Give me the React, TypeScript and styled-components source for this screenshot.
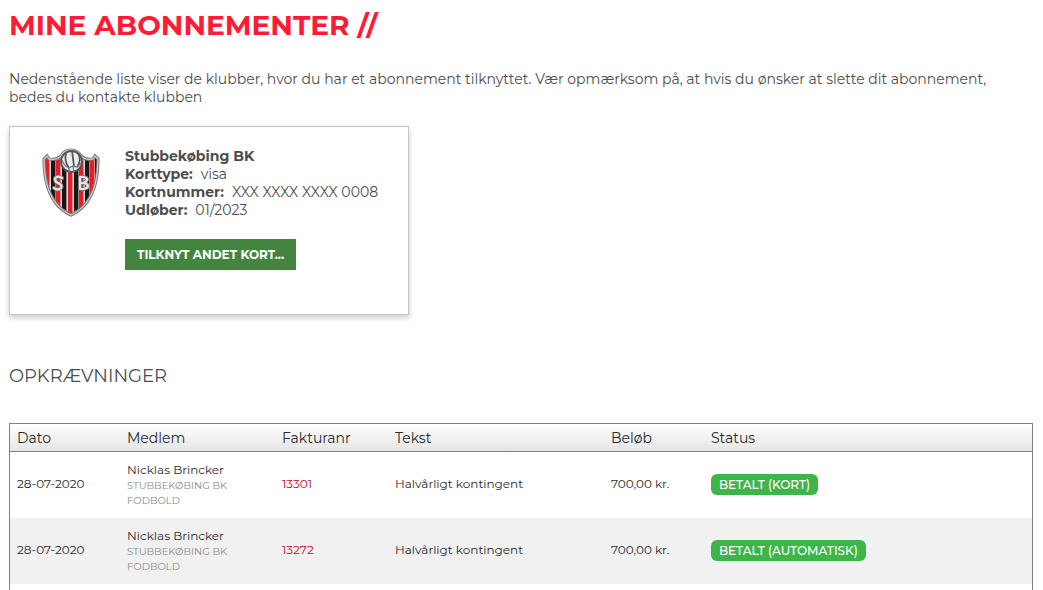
import React from 'react';
import styled, { createGlobalStyle } from 'styled-components';

const GlobalStyle = createGlobalStyle`
  *, *::before, *::after { box-sizing: border-box; }
  body {
    margin: 0;
    background: #fff;
    color: #4d4d4d;
    font-family: Montserrat, Inter, "Liberation Sans", sans-serif;
    font-size: 14px;
    line-height: 18px;
  }
`;

const Page = styled.main`
  display: flex;
  flex-direction: column;
  min-height: 100vh;
  padding: 7px 10px 0 9px;
`;

const Title = styled.h1`
  margin: 0 0 26px;
  color: #ff1a35;
  font-size: 28px;
  font-weight: 700;
  line-height: 36px;
  text-transform: uppercase;
`;

const Intro = styled.p`
  margin: 0 0 20px;
  max-width: 1000px;
  padding-top: 1px;
`;

const Card = styled.section`
  display: flex;
  gap: 24px;
  width: 400px;
  max-width: 100%;
  padding: 20px 20px 44px 31px;
  border: 1px solid #c4c4c4;
  box-shadow: 0 3px 6px rgba(0, 0, 0, 0.2);
`;

const Crest = styled.svg`
  flex: none;
  width: 60px;
  height: 72px;
`;

const CardBody = styled.div`
  flex: 1;
`;

const CardLine = styled.div`
  white-space: nowrap;
`;

const Label = styled.strong<{ $spaced?: boolean }>`
  font-weight: 700;
  margin-right: ${({ $spaced }) => ($spaced ? '8px' : '0')};
`;

const LinkCardButton = styled.button`
  height: 31px;
  margin-top: 20px;
  padding: 0 12px;
  border: 0;
  background: #43853f;
  color: #fff;
  font: inherit;
  font-size: 12px;
  font-weight: 700;
  text-transform: uppercase;
  white-space: nowrap;
  cursor: pointer;
`;

const SectionTitle = styled.h2`
  margin: 49px 0 35px;
  font-size: 18px;
  font-weight: 400;
  line-height: 24px;
  text-transform: uppercase;
`;

const TableFrame = styled.div`
  flex: 1;
  border: 1px solid #7f7f7f;
  border-bottom: 0;
`;

const Table = styled.table`
  width: 100%;
  border-collapse: separate;
  border-spacing: 0;
  table-layout: fixed;
  color: #2b2b2b;
  font-size: 12px;
`;

const HeadCell = styled.th<{ $width?: number }>`
  width: ${({ $width }) => ($width ? `${$width}px` : 'auto')};
  height: 28px;
  padding: 0 7px;
  border-bottom: 1px solid #7f7f7f;
  font-size: 14px;
  font-weight: 400;
  text-align: left;
`;

const HeadRow = styled.tr`
  background: linear-gradient(#fff, #e4e4e4);
`;

const Row = styled.tr`
  &:nth-child(even) { background: #f1f1f1; }
`;

const Cell = styled.td`
  height: 66px;
  padding: 0 7px 2px;
  vertical-align: middle;
`;

const Member = styled.div`
  line-height: 17px;
`;

const Club = styled.div`
  color: #8c8c8c;
  font-size: 10px;
  line-height: 15px;
  text-transform: uppercase;
`;

const InvoiceLink = styled.a`
  color: #c00a26;
  text-decoration: none;
`;

const Badge = styled.span`
  display: inline-block;
  padding: 0 8px;
  border-radius: 6px;
  background: #3eb549;
  color: #fff;
  font-weight: 500;
  line-height: 21px;
  text-transform: uppercase;
  vertical-align: middle;
  white-space: nowrap;
`;

const columns = [
  { name: 'Dato', width: 110 },
  { name: 'Medlem', width: 155 },
  { name: 'Fakturanr', width: 113 },
  { name: 'Tekst', width: 216 },
  { name: 'Beløb', width: 100 },
  { name: 'Status' },
];

const charges = [
  { invoice: '13301', status: 'Betalt (kort)' },
  { invoice: '13272', status: 'Betalt (automatisk)' },
];

const shield =
  'M30 3C25 3 22 5 20 9C17 12 13 13 8 12L6 9L3 12C3 31 6 44 14 55C18 61 24 65 30 68C36 65 42 61 46 55C54 44 57 31 57 12L54 9L52 12C47 13 43 12 40 9C38 5 35 3 30 3Z';

const stripes = [
  { x: 4, color: '#ed1c24' },
  { x: 10, color: '#171717' },
  { x: 15, color: '#ed1c24' },
  { x: 21, color: '#171717' },
  { x: 27, color: '#ed1c24' },
  { x: 33, color: '#171717' },
  { x: 38, color: '#ed1c24' },
  { x: 44, color: '#171717' },
  { x: 49, color: '#ed1c24' },
  { x: 54, color: '#171717' },
];

function ClubCrest() {
  return (
    <Crest viewBox="0 0 60 72" role="img" aria-label="Stubbekøbing BK">
      <defs>
        <clipPath id="crest-shape">
          <path d={shield} />
        </clipPath>
      </defs>
      <path d={shield} fill="#ddd" />
      <g clipPath="url(#crest-shape)">
        {stripes.map((s) => (
          <rect key={s.x} x={s.x} y="8" width="4.4" height="64" fill={s.color} />
        ))}
      </g>
      <path d={shield} fill="none" stroke="#777" strokeWidth="3.2" />
      <path d={shield} fill="none" stroke="#ccc" strokeWidth="1.3" />
      <circle cx="30.5" cy="14.5" r="10.5" fill="#eee" stroke="#555" strokeWidth="1.8" />
      <path
        d="M25 6Q23 14 28 21M31 4L33 19M37 6Q41 13 36 20"
        fill="none"
        stroke="#555"
        strokeWidth="1.8"
      />
      <path
        d="M21 13Q23 19 28 21L32 19L36 20L40 16M28 21V25M32 19L33 25"
        fill="none"
        stroke="#777"
        strokeWidth="1.3"
      />
      <g fill="none" strokeLinecap="round" strokeLinejoin="round">
        <g stroke="#777" strokeWidth="4">
          <path d="M21 31Q15 28 14 32Q14 35 17 36Q22 38 20 41Q17 44 13 41" />
          <path d="M39 30V42H43Q47 41 47 39Q46 36 42 36H39M42 36Q46 35 46 32Q45 30 42 30H39" />
        </g>
        <g stroke="#e6e6e6" strokeWidth="2.2">
          <path d="M21 31Q15 28 14 32Q14 35 17 36Q22 38 20 41Q17 44 13 41" />
          <path d="M39 30V42H43Q47 41 47 39Q46 36 42 36H39M42 36Q46 35 46 32Q45 30 42 30H39" />
        </g>
      </g>
    </Crest>
  );
}

export default function App() {
  return (
    <>
      <GlobalStyle />
      <Page>
        <Title>Mine abonnementer //</Title>
        <Intro>
          Nedenstående liste viser de klubber, hvor du har et abonnement tilknyttet. Vær opmærksom
          på, at hvis du ønsker at slette dit abonnement, bedes du kontakte klubben
        </Intro>
        <Card>
          <ClubCrest />
          <CardBody>
            <CardLine><Label>Stubbekøbing BK</Label></CardLine>
            <CardLine><Label $spaced>Korttype:</Label>visa</CardLine>
            <CardLine><Label $spaced>Kortnummer:</Label>XXX XXXX XXXX 0008</CardLine>
            <CardLine><Label $spaced>Udløber:</Label>01/2023</CardLine>
            <LinkCardButton type="button">Tilknyt andet kort...</LinkCardButton>
          </CardBody>
        </Card>
        <SectionTitle>Opkrævninger</SectionTitle>
        <TableFrame>
          <Table>
            <thead>
              <HeadRow>
                {columns.map((c) => (
                  <HeadCell key={c.name} scope="col" $width={c.width}>{c.name}</HeadCell>
                ))}
              </HeadRow>
            </thead>
            <tbody>
              {charges.map((c) => (
                <Row key={c.invoice}>
                  <Cell>28-07-2020</Cell>
                  <Cell>
                    <Member>Nicklas Brincker</Member>
                    <Club>Stubbekøbing BK<br />Fodbold</Club>
                  </Cell>
                  <Cell><InvoiceLink href="#">{c.invoice}</InvoiceLink></Cell>
                  <Cell>Halvårligt kontingent</Cell>
                  <Cell>700,00 kr.</Cell>
                  <Cell><Badge>{c.status}</Badge></Cell>
                </Row>
              ))}
            </tbody>
          </Table>
        </TableFrame>
      </Page>
    </>
  );
}
